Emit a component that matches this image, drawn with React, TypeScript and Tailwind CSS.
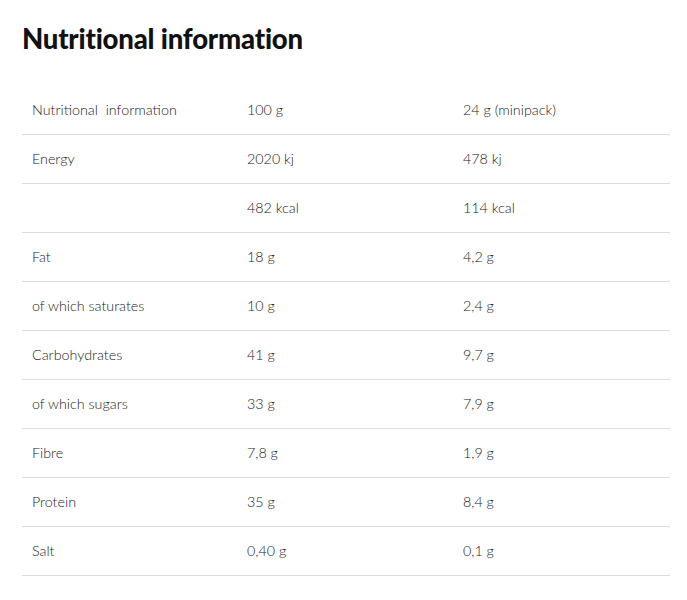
const rows: [string, string, string][] = [
  ['Nutritional  information', '100 g', '24 g (minipack)'],
  ['Energy', '2020 kj', '478 kj'],
  ['', '482 kcal', '114 kcal'],
  ['Fat', '18 g', '4,2 g'],
  ['of which saturates', '10 g', '2,4 g'],
  ['Carbohydrates', '41 g', '9,7 g'],
  ['of which sugars', '33 g', '7,9 g'],
  ['Fibre', '7,8 g', '1,9 g'],
  ['Protein', '35 g', '8,4 g'],
  ['Salt', '0,40 g', '0,1 g'],
];

export default function App() {
  return (
    <div className="min-h-[600px] bg-white pl-[22px] pt-[22px]" style={{ fontFamily: 'Lato, sans-serif' }}>
      <h1 className="text-[27.5px] font-black leading-[34px] tracking-[-0.2px] text-[#111]">Nutritional information</h1>
      <div className="mt-[30px] w-[648px]">
        {rows.map(([label, a, b], i) => (
          <div key={i} className="grid h-[49px] grid-cols-[215px_216px_217px] items-center border-b border-[#dcdcdc] text-[14.3px] font-light text-[#222]">
            <span className="whitespace-pre pl-[10px]">{label}</span>
            <span className="pl-[10px]">{a}</span>
            <span className="pl-[10px]">{b}</span>
          </div>
        ))}
      </div>
    </div>
  );
}
